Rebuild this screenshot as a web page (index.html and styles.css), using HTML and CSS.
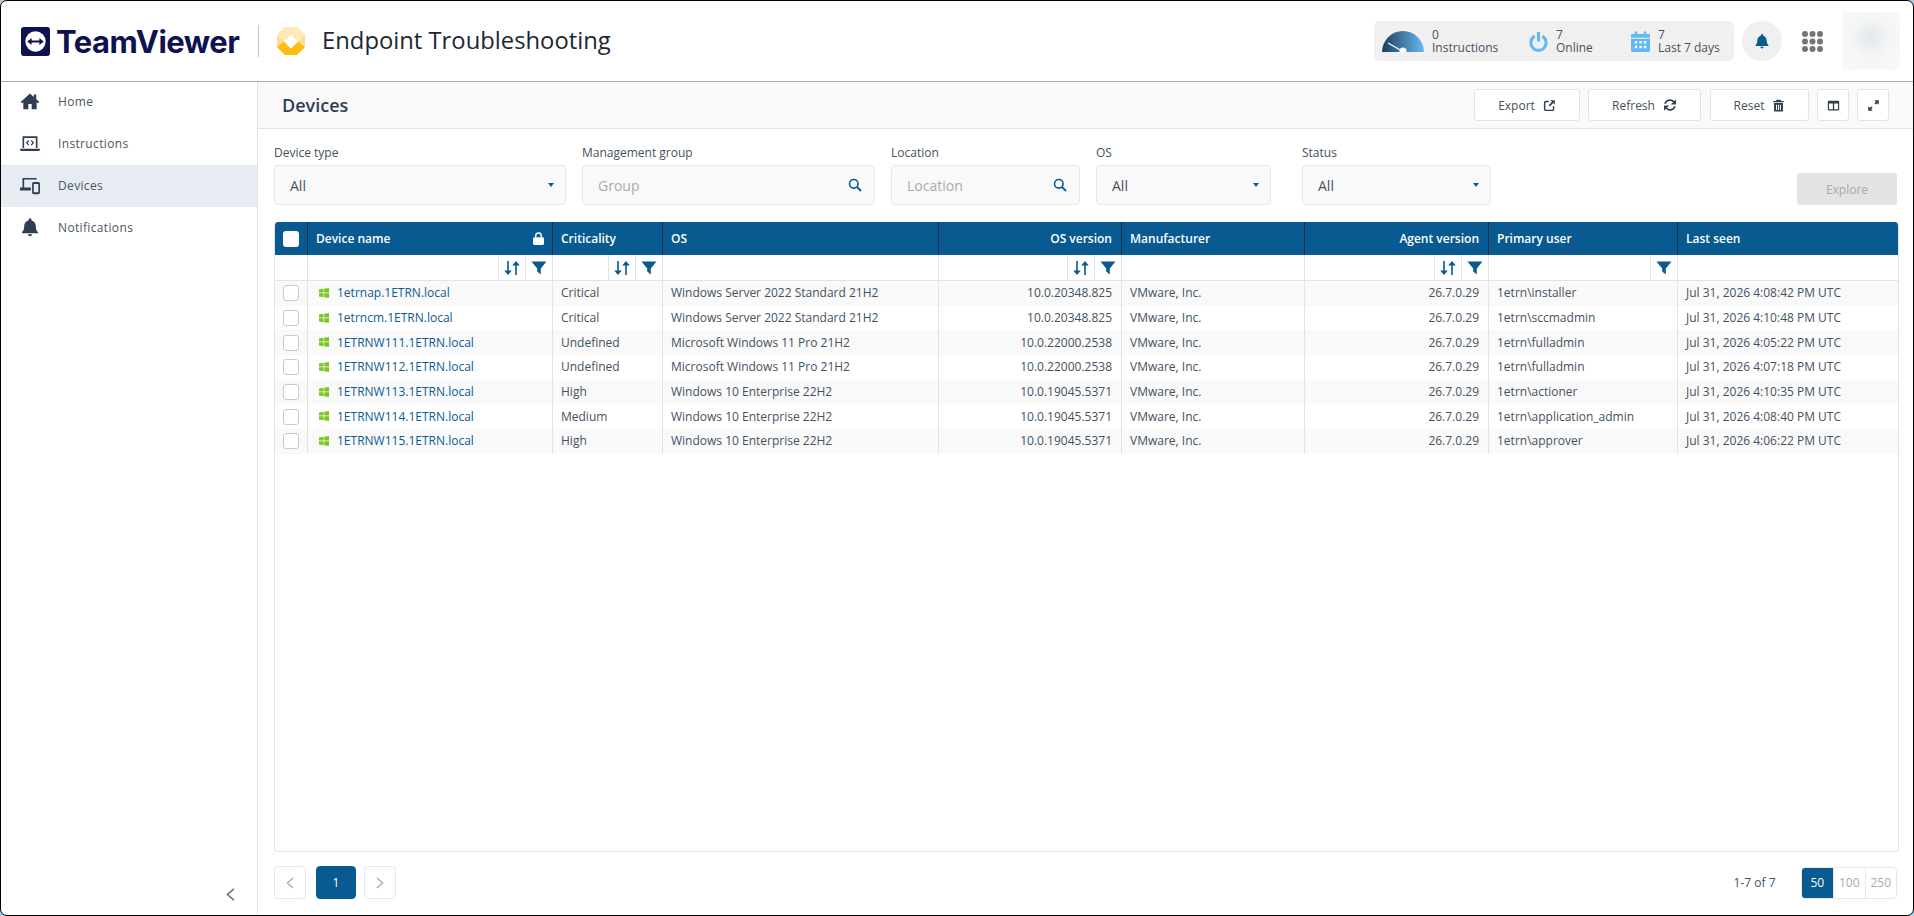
FILE: index.html
```html
<!DOCTYPE html>
<html lang="en">

<head>
    <meta charset="UTF-8">
    <meta name="viewport" content="width=device-width, initial-scale=1.0">
    <title>Endpoint Troubleshooting - Devices</title>
    <link rel="stylesheet" href="styles.css">
</head>

<body>
    <svg class="defs" aria-hidden="true">
        <symbol id="i-bell" viewBox="0 0 24 24"><path d="M12 1.5a1.8 1.8 0 0 0-1.8 1.8v.9C7 5 5 7.700 5 11c0 4.500-1.200 5.500-2.600 7v1.500h19.200V18c-1.400-1.500-2.600-2.500-2.600-7 0-3.300-2-6-5.200-6.800v-.9A1.800 1.800 0 0 0 12 1.500zM9.500 20.700a2.500 2.500 0 0 0 5 0z"/></symbol>
        <symbol id="i-sort" viewBox="0 0 16 16"><path d="M3.200 1h1.600v9.500h3L4 15 .2 10.500h3zM12 1l3.800 4.500h-3V15h-1.600V5.500h-3z"/></symbol>
        <symbol id="i-filter" viewBox="0 0 16 16"><path d="M.5 1.500h15L9.800 8.500v6L6.200 11.500v-3z"/></symbol>
        <symbol id="i-win" viewBox="0 0 10 10"><path d="M0 1.400 4.500.8v3.800H0zM5.200.7 10 0v4.600H5.200zM0 5.300h4.500v3.900L0 8.600zM5.200 5.300H10V10l-4.800-.7z"/></symbol>
    </svg>

    <div class="window">
        <header class="topbar">
            <div class="logo">
                <svg class="logo-mark" viewBox="0 0 30 30">
                    <rect width="30" height="30" rx="3" fill="#0e1250"/>
                    <circle cx="15" cy="15" r="10.500" fill="#fff"/>
                    <path d="M6.500 15 11 11.500V14h8v-2.500l4.500 3.500-4.500 3.500V16h-8v2.500z" fill="#0e1250"/>
                </svg>
                <span class="logo-text">TeamViewer</span>
            </div>
            <span class="top-divider"></span>
            <svg class="product-icon" viewBox="0 0 28 28">
                <path d="M8 0h12l8 8v12l-8 8H8l-8-8V8z" fill="#fede94"/>
                <path d="M8 0h12l-6 7.500zM0 8l8-8 6 7.500-7 7zM28 8l-8-8-6 7.500 7 7z" fill="#ffe9b4"/>
                <path d="M7 14.500l7 7 7-7 7 5.500-8 8H8l-8-8z" fill="#ffbd12"/>
                <path d="M14 7.500l7 7-7 7-7-7z" fill="#fff"/>
            </svg>
            <h1 class="product-name">Endpoint Troubleshooting</h1>

            <div class="top-right">
                <div class="stats">
                    <div class="stat stat-instructions">
                        <svg class="gauge" viewBox="0 0 42 22">
                            <defs>
                                <linearGradient id="gauge-fill" x1="0" x2="1" y1="0" y2="0">
                                    <stop offset="0" stop-color="#1d3d5c"/>
                                    <stop offset="1" stop-color="#67b9f0"/>
                                </linearGradient>
                            </defs>
                            <path d="M0 22A21 21 0 0 1 42 22z" fill="url(#gauge-fill)"/>
                            <path d="M6 13 20 21" stroke="#fff" stroke-width="1.200"/>
                            <circle cx="21" cy="21" r="3.500" fill="#fff"/>
                        </svg>
                        <div class="stat-text"><span>0</span><span>Instructions</span></div>
                    </div>
                    <div class="stat stat-online">
                        <svg class="stat-icon" viewBox="0 0 20 22">
                            <path d="M6 5.400a8 8 0 1 0 8 0" fill="none" stroke="#62b8f5" stroke-width="3.200"/>
                            <path d="M10 1v10" stroke="#62b8f5" stroke-width="3.200"/>
                        </svg>
                        <div class="stat-text"><span>7</span><span>Online</span></div>
                    </div>
                    <div class="stat stat-week">
                        <svg class="stat-icon" viewBox="0 0 20 22">
                            <path d="M1.500 3H4V.5h2.500V3h7V.5H16V3h2.500A1.500 1.500 0 0 1 20 4.500V7H0V4.500A1.500 1.500 0 0 1 1.500 3zM0 8h20v12.500a1.500 1.500 0 0 1-1.500 1.500h-17A1.500 1.500 0 0 1 0 20.500z" fill="#62b8f5"/>
                            <path d="M4 10.500h2.500v2.500H4zM8.800 10.500h2.500v2.500H8.800zM13.500 10.500H16v2.500h-2.500zM4 15.500h2.500V18H4zM8.800 15.500h2.500V18H8.800zM13.500 15.500H16V18h-2.500z" fill="#fff"/>
                        </svg>
                        <div class="stat-text"><span>7</span><span>Last 7 days</span></div>
                    </div>
                </div>
                <button class="bell-btn"><svg class="bell-icon"><use href="#i-bell"/></svg></button>
                <svg class="apps" viewBox="0 0 21 21">
                    <g fill="#757575">
                        <circle cx="3" cy="3" r="3"/><circle cx="10.500" cy="3" r="3"/><circle cx="18" cy="3" r="3"/>
                        <circle cx="3" cy="10.500" r="3"/><circle cx="10.500" cy="10.500" r="3"/><circle cx="18" cy="10.500" r="3"/>
                        <circle cx="3" cy="18" r="3"/><circle cx="10.500" cy="18" r="3"/><circle cx="18" cy="18" r="3"/>
                    </g>
                </svg>
                <div class="avatar"></div>
            </div>
        </header>

        <div class="body">
            <nav class="sidebar">
                <ul class="nav">
                    <li>
                        <svg class="nav-icon" viewBox="0 0 24 24"><path d="M12 3 .8 13.200 2.400 14.800 4 13.400V22h6v-6.500h4V22h6v-8.600l1.600 1.400 1.600-1.600L19.500 9.800V4.200h-3v2.900z"/></svg>
                        Home
                    </li>
                    <li>
                        <svg class="nav-icon" viewBox="0 0 24 24"><path d="M3 4h18v14h-2V6H5v12H3zM0 19h24v.8A1.700 1.700 0 0 1 22.300 21.500H1.700A1.700 1.700 0 0 1 0 19.800z"/><path d="M10.500 9 8 11.800l2.500 2.800M13.500 9l2.500 2.800-2.500 2.800" fill="none" stroke="currentColor" stroke-width="1.500"/></svg>
                        Instructions
                    </li>
                    <li class="active">
                        <svg class="nav-icon" viewBox="0 0 24 24"><path d="M3 3.500h17v2H5V15h8v3.500H0V15h3z"/><path d="M16.500 8.500h5.500a2 2 0 0 1 2 2V21a2 2 0 0 1-2 2h-5.500a2 2 0 0 1-2-2V10.500a2 2 0 0 1 2-2zm0 2.200V20.800H22V10.700z" fill-rule="evenodd"/></svg>
                        Devices
                    </li>
                    <li>
                        <svg class="nav-icon"><use href="#i-bell"/></svg>
                        Notifications
                    </li>
                </ul>
                <svg class="collapse" viewBox="0 0 9 13"><path d="M8 .8 1.500 6.500 8 12.200" fill="none" stroke="#666" stroke-width="1.500"/></svg>
            </nav>

            <main class="main">
                <div class="page-head">
                    <h2>Devices</h2>
                    <div class="actions">
                        <button class="btn btn-export">Export
                            <svg class="btn-icon" viewBox="0 0 16 16"><path d="M7 3H3.500A1.500 1.500 0 0 0 2 4.500v8A1.500 1.500 0 0 0 3.500 14h8a1.500 1.500 0 0 0 1.500-1.500V9" fill="none" stroke="currentColor" stroke-width="1.800"/><path d="M9 1.500h5.500V7l-2-2-4 4.200L7 7.800l4-4.300z"/></svg>
                        </button>
                        <button class="btn btn-refresh">Refresh
                            <svg class="btn-icon btn-icon-big" viewBox="0 0 16 16"><path d="M1.300 6.500a6.900 6.900 0 0 1 11.500-2.900L14.800 1.500v5.800H9l2.500-2.500a5.100 5.100 0 0 0-8.300 1.700zM14.700 9.500a6.900 6.900 0 0 1-11.500 2.900L1.200 14.500V8.700H7l-2.500 2.500a5.100 5.100 0 0 0 8.300-1.700z"/></svg>
                        </button>
                        <button class="btn btn-reset">Reset
                            <svg class="btn-icon" viewBox="0 0 16 16"><path d="M5.500 1h5l.7 1.500H14.500V4h-13V2.500h3.300zM2.500 5h11v9a1.500 1.500 0 0 1-1.500 1.500H4A1.500 1.500 0 0 1 2.500 14zM5 7v6.500h1.200V7zm2.400 0v6.500h1.200V7zm2.400 0v6.500H11V7z" fill-rule="evenodd"/></svg>
                        </button>
                        <button class="btn btn-square">
                            <svg class="btn-icon" viewBox="0 0 16 16"><path d="M2.500 2h11A1.500 1.500 0 0 1 15 3.500v9a1.500 1.500 0 0 1-1.500 1.500h-11A1.500 1.500 0 0 1 1 12.500v-9A1.500 1.500 0 0 1 2.500 2zm0 3.500v7h4.700v-7zm6.300 0v7h4.700v-7z" fill-rule="evenodd"/></svg>
                        </button>
                        <button class="btn btn-square">
                            <svg class="btn-icon" viewBox="0 0 16 16"><path d="M9 1.500h5.500V7l-1.900-1.900-1.800 1.800-1.700-1.700 1.800-1.800zM7 14.500H1.500V9l1.900 1.900 1.800-1.800 1.700 1.700-1.800 1.800z"/></svg>
                        </button>
                    </div>
                </div>

                <div class="content">
                    <form class="filters">
                        <div class="field f-type">
                            <label>Device type</label>
                            <div class="input">All<span class="caret"></span></div>
                        </div>
                        <div class="field f-group">
                            <label>Management group</label>
                            <div class="input placeholder">Group
                                <svg class="search" viewBox="0 0 14 14"><circle cx="5.800" cy="5.800" r="4.300" fill="none" stroke="#0a5a92" stroke-width="1.600"/><path d="m9 9 4 4" stroke="#0a5a92" stroke-width="1.800"/></svg>
                            </div>
                        </div>
                        <div class="field f-location">
                            <label>Location</label>
                            <div class="input placeholder">Location
                                <svg class="search" viewBox="0 0 14 14"><circle cx="5.800" cy="5.800" r="4.300" fill="none" stroke="#0a5a92" stroke-width="1.600"/><path d="m9 9 4 4" stroke="#0a5a92" stroke-width="1.800"/></svg>
                            </div>
                        </div>
                        <div class="field f-os">
                            <label>OS</label>
                            <div class="input">All<span class="caret"></span></div>
                        </div>
                        <div class="field f-status">
                            <label>Status</label>
                            <div class="input">All<span class="caret"></span></div>
                        </div>
                        <button class="explore" type="button">Explore</button>
                    </form>

                    <section class="table-box">
                        <div class="cols thead">
                            <div class="cell"><span class="check check-head"></span></div>
                            <div class="cell cell-name">Device name
                                <svg class="lock" viewBox="0 0 12 14"><path d="M3 6V4a3 3 0 0 1 6 0v2" fill="none" stroke="#fff" stroke-width="1.500"/><rect y="5.500" width="12" height="8.500" rx="1.500" fill="#fff"/></svg>
                            </div>
                            <div class="cell">Criticality</div>
                            <div class="cell">OS</div>
                            <div class="cell right">OS version</div>
                            <div class="cell">Manufacturer</div>
                            <div class="cell right">Agent version</div>
                            <div class="cell">Primary user</div>
                            <div class="cell">Last seen</div>
                        </div>
                        <div class="cols tools">
                            <div class="cell"></div>
                            <div class="cell"><span class="tool"><svg><use href="#i-sort"/></svg></span><span class="tool"><svg><use href="#i-filter"/></svg></span></div>
                            <div class="cell"><span class="tool"><svg><use href="#i-sort"/></svg></span><span class="tool"><svg><use href="#i-filter"/></svg></span></div>
                            <div class="cell"></div>
                            <div class="cell"><span class="tool"><svg><use href="#i-sort"/></svg></span><span class="tool"><svg><use href="#i-filter"/></svg></span></div>
                            <div class="cell"></div>
                            <div class="cell"><span class="tool"><svg><use href="#i-sort"/></svg></span><span class="tool"><svg><use href="#i-filter"/></svg></span></div>
                            <div class="cell"><span class="tool"><svg><use href="#i-filter"/></svg></span></div>
                            <div class="cell"></div>
                        </div>
                        <div class="cols row">
                            <div class="cell"><span class="check"></span></div>
                            <div class="cell"><svg class="win"><use href="#i-win"/></svg><a class="dev-link">1etrnap.1ETRN.local</a></div>
                            <div class="cell">Critical</div>
                            <div class="cell">Windows Server 2022 Standard 21H2</div>
                            <div class="cell right">10.0.20348.825</div>
                            <div class="cell">VMware, Inc.</div>
                            <div class="cell right">26.7.0.29</div>
                            <div class="cell">1etrn\installer</div>
                            <div class="cell">Jul 31, 2026 4:08:42 PM UTC</div>
                        </div>
                        <div class="cols row">
                            <div class="cell"><span class="check"></span></div>
                            <div class="cell"><svg class="win"><use href="#i-win"/></svg><a class="dev-link">1etrncm.1ETRN.local</a></div>
                            <div class="cell">Critical</div>
                            <div class="cell">Windows Server 2022 Standard 21H2</div>
                            <div class="cell right">10.0.20348.825</div>
                            <div class="cell">VMware, Inc.</div>
                            <div class="cell right">26.7.0.29</div>
                            <div class="cell">1etrn\sccmadmin</div>
                            <div class="cell">Jul 31, 2026 4:10:48 PM UTC</div>
                        </div>
                        <div class="cols row">
                            <div class="cell"><span class="check"></span></div>
                            <div class="cell"><svg class="win"><use href="#i-win"/></svg><a class="dev-link">1ETRNW111.1ETRN.local</a></div>
                            <div class="cell">Undefined</div>
                            <div class="cell">Microsoft Windows 11 Pro 21H2</div>
                            <div class="cell right">10.0.22000.2538</div>
                            <div class="cell">VMware, Inc.</div>
                            <div class="cell right">26.7.0.29</div>
                            <div class="cell">1etrn\fulladmin</div>
                            <div class="cell">Jul 31, 2026 4:05:22 PM UTC</div>
                        </div>
                        <div class="cols row">
                            <div class="cell"><span class="check"></span></div>
                            <div class="cell"><svg class="win"><use href="#i-win"/></svg><a class="dev-link">1ETRNW112.1ETRN.local</a></div>
                            <div class="cell">Undefined</div>
                            <div class="cell">Microsoft Windows 11 Pro 21H2</div>
                            <div class="cell right">10.0.22000.2538</div>
                            <div class="cell">VMware, Inc.</div>
                            <div class="cell right">26.7.0.29</div>
                            <div class="cell">1etrn\fulladmin</div>
                            <div class="cell">Jul 31, 2026 4:07:18 PM UTC</div>
                        </div>
                        <div class="cols row">
                            <div class="cell"><span class="check"></span></div>
                            <div class="cell"><svg class="win"><use href="#i-win"/></svg><a class="dev-link">1ETRNW113.1ETRN.local</a></div>
                            <div class="cell">High</div>
                            <div class="cell">Windows 10 Enterprise 22H2</div>
                            <div class="cell right">10.0.19045.5371</div>
                            <div class="cell">VMware, Inc.</div>
                            <div class="cell right">26.7.0.29</div>
                            <div class="cell">1etrn\actioner</div>
                            <div class="cell">Jul 31, 2026 4:10:35 PM UTC</div>
                        </div>
                        <div class="cols row">
                            <div class="cell"><span class="check"></span></div>
                            <div class="cell"><svg class="win"><use href="#i-win"/></svg><a class="dev-link">1ETRNW114.1ETRN.local</a></div>
                            <div class="cell">Medium</div>
                            <div class="cell">Windows 10 Enterprise 22H2</div>
                            <div class="cell right">10.0.19045.5371</div>
                            <div class="cell">VMware, Inc.</div>
                            <div class="cell right">26.7.0.29</div>
                            <div class="cell">1etrn\application_admin</div>
                            <div class="cell">Jul 31, 2026 4:08:40 PM UTC</div>
                        </div>
                        <div class="cols row">
                            <div class="cell"><span class="check"></span></div>
                            <div class="cell"><svg class="win"><use href="#i-win"/></svg><a class="dev-link">1ETRNW115.1ETRN.local</a></div>
                            <div class="cell">High</div>
                            <div class="cell">Windows 10 Enterprise 22H2</div>
                            <div class="cell right">10.0.19045.5371</div>
                            <div class="cell">VMware, Inc.</div>
                            <div class="cell right">26.7.0.29</div>
                            <div class="cell">1etrn\approver</div>
                            <div class="cell">Jul 31, 2026 4:06:22 PM UTC</div>
                        </div>
                    </section>

                    <div class="pager">
                        <button class="page-btn"><svg viewBox="0 0 9 13"><path d="M8 .8 1.500 6.500 8 12.200" fill="none" stroke="#aaa" stroke-width="1.500"/></svg></button>
                        <button class="page-btn page-current">1</button>
                        <button class="page-btn"><svg viewBox="0 0 9 13"><path d="M1 .8 7.500 6.500 1 12.200" fill="none" stroke="#aaa" stroke-width="1.500"/></svg></button>
                        <span class="count">1-7 of 7</span>
                        <div class="sizes">
                            <span class="size size-current">50</span>
                            <span class="size">100</span>
                            <span class="size">250</span>
                        </div>
                    </div>
                </div>
            </main>
        </div>
    </div>
</body>

</html>
```

FILE: styles.css
```css
* {
    box-sizing: border-box;
}

html,
body {
    margin: 0;
    height: 100%;
    background-color: #a9cbe0;
}

body {
    font-family: "Open Sans", "Noto Sans", sans-serif;
    font-size: 12px;
    color: #44525f;
    overflow: hidden;
}

.defs {
    display: none;
}

button {
    font-family: inherit;
}

.window {
    display: flex;
    flex-direction: column;
    width: 1914px;
    height: 916px;
    background-color: #fff;
    border: 1px solid #000;
    border-radius: 7px;
    overflow: hidden;
}

/* top bar */
.topbar {
    display: flex;
    align-items: center;
    height: 81px;
    flex-shrink: 0;
    padding: 0 13px 0 20px;
    border-bottom: 1px solid #a9a9a9;
}

.logo {
    display: flex;
    align-items: center;
    width: 237px;
}

.logo-mark {
    width: 29px;
    height: 29px;
    flex-shrink: 0;
}

.logo-text {
    margin-left: 6px;
    font-family: "Inter", sans-serif;
    font-size: 31px;
    font-weight: 700;
    letter-spacing: -0.5px;
    color: #0e1250;
}

.top-divider {
    width: 1px;
    height: 32px;
    background-color: #c4c4c4;
}

.product-icon {
    width: 28px;
    height: 28px;
    margin-left: 18px;
}

.product-name {
    margin: 0 0 2px 17px;
    font-size: 23.8px;
    font-weight: 400;
    color: #1d2733;
}

.top-right {
    display: flex;
    align-items: center;
    margin-left: auto;
}

.stats {
    display: flex;
    width: 360px;
    height: 40px;
    background-color: #f0f0f0;
    border-radius: 6px;
}

.stat {
    display: flex;
    align-items: center;
}

.stat-instructions {
    width: 155px;
    padding-left: 8px;
}

.stat-online {
    width: 102px;
}

.gauge {
    width: 42px;
    height: 22px;
    margin-right: 8px;
}

.stat-icon {
    width: 19px;
    height: 21px;
    margin-right: 8px;
}

.stat-text {
    display: flex;
    flex-direction: column;
    font-size: 12px;
    line-height: 13px;
    color: #44525f;
}

.bell-btn {
    display: flex;
    align-items: center;
    justify-content: center;
    width: 40px;
    height: 40px;
    margin-left: 8px;
    padding: 0;
    border: 0;
    border-radius: 50%;
    background-color: #f0f0f0;
}

.bell-icon {
    width: 16px;
    height: 16px;
    fill: #0a5a92;
}

.apps {
    width: 21px;
    height: 21px;
    margin-left: 20px;
}

.avatar {
    width: 58px;
    height: 58px;
    margin-left: 19px;
    background: radial-gradient(circle at 50% 45%, #e3e8ec 0, #f4f5f6 45%, #fafafa 100%);
}

/* sidebar */
.body {
    display: flex;
    flex: 1;
    min-height: 0;
}

.sidebar {
    position: relative;
    width: 257px;
    flex-shrink: 0;
    border-right: 1px solid #e3e3e3;
}

.nav {
    margin: -1px 0 0;
    padding: 0;
    list-style: none;
}

.nav li {
    display: flex;
    align-items: center;
    height: 42px;
    padding: 0 0 2px 19px;
    letter-spacing: 0.35px;
    color: #4a5666;
}

.nav li.active {
    background-color: #e6ecf2;
}

.nav-icon {
    width: 20px;
    height: 20px;
    margin-right: 18px;
    fill: #2f3e52;
    color: #2f3e52;
}

.collapse {
    position: absolute;
    right: 22px;
    bottom: 14px;
    width: 9px;
    height: 13px;
}

/* main */
.main {
    display: flex;
    flex-direction: column;
    flex: 1;
    min-width: 0;
}

.page-head {
    display: flex;
    align-items: center;
    justify-content: space-between;
    height: 47px;
    flex-shrink: 0;
    padding: 0 24px 0 24px;
    background-color: #f9f9f9;
    border-bottom: 1px solid #e3e3e3;
}

.page-head h2 {
    margin: 0;
    font-size: 18px;
    font-weight: 600;
    color: #2f3e52;
}

.actions {
    display: flex;
    gap: 8px;
}

.btn {
    display: flex;
    align-items: center;
    justify-content: center;
    gap: 8px;
    height: 32px;
    padding: 0;
    background-color: #fff;
    border: 1px solid #e3e3e3;
    border-radius: 3px;
    font-size: 12px;
    color: #44525f;
}

.btn-export {
    width: 106px;
}

.btn-refresh {
    width: 113px;
    margin-right: 1px;
}

.btn-reset {
    width: 99px;
}

.btn-square {
    width: 32px;
}

.btn-icon {
    width: 13px;
    height: 13px;
    fill: #2f3e52;
    color: #2f3e52;
}

.btn-icon-big {
    width: 14px;
    height: 14px;
}

.content {
    display: flex;
    flex-direction: column;
    flex: 1;
    min-height: 0;
    padding: 16px 14px 16px 16px;
}

/* filters */
.filters {
    display: flex;
    align-items: flex-end;
    gap: 16px;
    flex-shrink: 0;
}

.field label {
    display: block;
    height: 20px;
    line-height: 15px;
    font-size: 12px;
    font-weight: 500;
    color: #44525f;
}

.f-type {
    width: 292px;
}

.f-group {
    width: 293px;
}

.f-location {
    width: 189px;
}

.f-os {
    width: 175px;
}

.f-status {
    width: 189px;
    margin-left: 15px;
}

.input {
    display: flex;
    align-items: center;
    justify-content: space-between;
    height: 40px;
    padding: 0 11px 0 15px;
    background-color: #f9f9f9;
    border: 1px solid #e8e8e8;
    border-radius: 4px;
    font-size: 14px;
    color: #44525f;
}

.placeholder {
    padding-right: 12px;
    color: #a9a9a9;
}

.caret {
    width: 0;
    height: 0;
    border-left: 3.5px solid transparent;
    border-right: 3.5px solid transparent;
    border-top: 4px solid #0a5a92;
}

.search {
    width: 14px;
    height: 14px;
}

.explore {
    width: 100px;
    height: 32px;
    margin-left: auto;
    margin-right: 2px;
    background-color: #e3e3e3;
    border: 0;
    border-radius: 3px;
    font-size: 12px;
    color: #a9a9a9;
}

/* table */
.table-box {
    flex: 1;
    min-height: 0;
    margin-top: 17px;
    background-color: #fff;
    border: 1px solid #e3e3e3;
    border-top: 0;
    border-radius: 4px;
    overflow: hidden;
}

.cols {
    display: grid;
    grid-template-columns: 32px 245px 110px 276px 183px 183px 184px 189px 1fr;
}

.cell {
    display: flex;
    align-items: center;
    min-width: 0;
    padding: 0 9px 0 8px;
    white-space: nowrap;
}

.cell.right {
    justify-content: flex-end;
}

.cell + .cell {
    border-left: 1px solid #e3e3e3;
}

.thead {
    height: 33px;
    background-color: #085a90;
    font-weight: 600;
    color: #fff;
}

.thead .cell:first-child {
    justify-content: center;
    padding: 0;
}

.thead .cell + .cell {
    border-left-color: #15304a;
}

.cell-name {
    justify-content: space-between;
}

.lock {
    width: 11px;
    height: 13px;
    margin-right: -1px;
}

.tools {
    height: 26px;
    border-bottom: 1px solid #e3e3e3;
}

.tools .cell {
    justify-content: flex-end;
    padding: 0;
}

.tool {
    display: flex;
    align-items: center;
    justify-content: center;
    width: 27px;
    height: 100%;
    border-left: 1px solid #e3e3e3;
}

.tool svg {
    width: 16px;
    height: 16px;
    fill: #085a90;
}

.row {
    height: 24.7px;
}

.row:nth-child(odd) {
    background-color: #f9f9f9;
}

.row .cell {
    padding-bottom: 1px;
}

.row .cell:first-child {
    justify-content: center;
    padding: 0;
}

.check {
    display: block;
    width: 16px;
    height: 16px;
    background-color: #fff;
    border: 1px solid #c9c9c9;
    border-radius: 3px;
}

.check-head {
    border: 0;
}

.win {
    width: 10px;
    height: 10px;
    margin: 0 8px 0 3px;
    fill: #7cc522;
}

.dev-link {
    color: #0b5c94;
}

/* paging */
.pager {
    display: flex;
    align-items: center;
    flex-shrink: 0;
    margin-top: 14px;
}

.page-btn {
    display: flex;
    align-items: center;
    justify-content: center;
    width: 32px;
    height: 33px;
    padding: 0;
    background-color: #fff;
    border: 1px solid #e8e8e8;
    border-radius: 4px;
}

.page-btn svg {
    width: 8px;
    height: 12px;
}

.page-current {
    width: 40px;
    margin: 0 8px 0 10px;
    background-color: #085a90;
    border-color: #085a90;
    font-size: 12px;
    color: #fff;
}

.count {
    margin-left: auto;
    font-size: 12px;
    color: #44525f;
}

.sizes {
    display: flex;
    height: 32px;
    margin-left: 25px;
    margin-right: 2px;
    border: 1px solid #e8e8e8;
    border-radius: 4px;
    overflow: hidden;
}

.size {
    display: flex;
    align-items: center;
    justify-content: center;
    width: 31.5px;
    font-size: 12px;
    color: #a9a9a9;
}

.size + .size {
    border-left: 1px solid #e8e8e8;
}

.size-current {
    background-color: #085a90;
    color: #fff;
}
```
